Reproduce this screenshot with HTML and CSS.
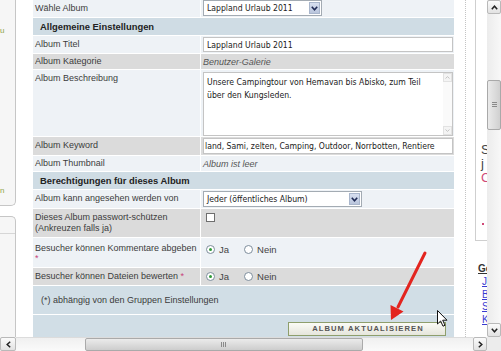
FILE: index.html
```html
<!DOCTYPE html>
<html lang="de">
<head>
<meta charset="utf-8">
<title>Album bearbeiten</title>
<link rel="stylesheet" href="styles.css">
</head>
<body>
<div class="screen">
  <div class="viewport">
    <aside class="leftpanel">
      <div class="lbox lbox-top">
        <span class="lnote">u</span>
        <span class="lnote lnote-b">n</span>
      </div>
      <div class="lbox lbox-bottom"><div class="lbox-head"></div></div>
    </aside>

    <main class="content">
      <table class="form">
        <colgroup><col class="c-label"><col class="c-value"></colgroup>
        <tr class="r17 light">
          <td class="lbl">Wähle Album</td>
          <td class="val val-top">
            <div class="select sel-album"><span class="sel-text">Lappland Urlaub 2011</span><span class="sel-btn"><svg width="7" height="5" viewBox="0 0 7 5"><polyline points="0.8,0.8 3.5,3.8 6.2,0.8" fill="none" stroke="#1f2a55" stroke-width="1.6"/></svg></span></div>
          </td>
        </tr>
        <tr class="r17 head"><td class="hd" colspan="2">Allgemeine Einstellungen</td></tr>
        <tr class="r17 light">
          <td class="lbl">Album Titel</td>
          <td class="val"><input class="field" type="text" value="Lappland Urlaub 2011"></td>
        </tr>
        <tr class="r15 gray">
          <td class="lbl lbl-tight">Album Kategorie</td>
          <td class="val"><span class="ital">Benutzer-Galerie</span></td>
        </tr>
        <tr class="r66 light">
          <td class="lbl">Album Beschreibung</td>
          <td class="val val-top">
            <div class="textarea">
              <div class="ta-text">Unsere Campingtour von Hemavan bis Abisko, zum Teil über den Kungsleden.</div>
              <div class="ta-bar">
                <span class="ta-btn"><svg width="5" height="3" viewBox="0 0 5 3"><polyline points="0.5,2.5 2.5,0.6 4.5,2.5" fill="none" stroke="#c4c4c4" stroke-width="1"/></svg></span>
                <span class="ta-btn"><svg width="5" height="3" viewBox="0 0 5 3"><polyline points="0.5,0.5 2.5,2.4 4.5,0.5" fill="none" stroke="#c4c4c4" stroke-width="1"/></svg></span>
              </div>
            </div>
          </td>
        </tr>
        <tr class="r18 gray">
          <td class="lbl">Album Keyword</td>
          <td class="val"><input class="field field-kw" type="text" value="land, Sami, zelten, Camping, Outdoor, Norrbotten, Rentiere"></td>
        </tr>
        <tr class="r15 light">
          <td class="lbl lbl-tight">Album Thumbnail</td>
          <td class="val"><span class="ital">Album ist leer</span></td>
        </tr>
        <tr class="r17 head"><td class="hd" colspan="2">Berechtigungen für dieses Album</td></tr>
        <tr class="r18 light">
          <td class="lbl">Album kann angesehen werden von</td>
          <td class="val">
            <div class="select sel-view"><span class="sel-text">Jeder (öffentliches Album)</span><span class="sel-btn"><svg width="7" height="5" viewBox="0 0 7 5"><polyline points="0.8,0.8 3.5,3.8 6.2,0.8" fill="none" stroke="#1f2a55" stroke-width="1.6"/></svg></span></div>
          </td>
        </tr>
        <tr class="r28 gray">
          <td class="lbl">Dieses Album passwort-schützen<br>(Ankreuzen falls ja)</td>
          <td class="val val-top"><span class="checkbox"></span></td>
        </tr>
        <tr class="r29 light">
          <td class="lbl lbl-loose">Besucher können Kommentare abgeben <span class="req req-block">*</span></td>
          <td class="val val-top">
            <div class="radios radios-top">
              <span class="radio on"></span><span class="rlabel">Ja</span>
              <span class="radio"></span><span class="rlabel">Nein</span>
            </div>
          </td>
        </tr>
        <tr class="r17 gray">
          <td class="lbl">Besucher können Dateien bewerten <span class="req">*</span></td>
          <td class="val">
            <div class="radios">
              <span class="radio on"></span><span class="rlabel">Ja</span>
              <span class="radio"></span><span class="rlabel">Nein</span>
            </div>
          </td>
        </tr>
        <tr class="r28 note"><td class="notecell" colspan="2">(*) abhängig von den Gruppen Einstellungen</td></tr>
        <tr class="r22 note"><td class="btncell" colspan="2"><button class="btn" type="button">ALBUM AKTUALISIEREN</button></td></tr>
      </table>
    </main>

    <div class="gutter"></div>

    <aside class="sidebar">
      <div class="sbox">
        <div class="sbox-text">S<br>j<br><span class="pink">C</span></div>
        <span class="pdot"></span>
      </div>
      <div class="golinks">
        <div class="go">Go</div>
        <a class="slink" href="#">J</a>
        <a class="slink" href="#">B</a>
        <a class="slink" href="#">S</a>
        <a class="slink" href="#">K</a>
      </div>
    </aside>

    <div class="vscroll">
      <span class="sb-btn"><svg width="7" height="5" viewBox="0 0 7 5"><polyline points="0.8,4.2 3.5,1.2 6.2,4.2" fill="none" stroke="#222" stroke-width="1.5"/></svg></span>
      <div class="vs-track"><div class="vs-thumb"><svg width="5" height="6" viewBox="0 0 5 6"><path d="M0 0.5H5M0 2.5H5M0 4.5H5" stroke="#8a8a8a" stroke-width="1"/></svg></div></div>
      <span class="sb-btn"><svg width="7" height="5" viewBox="0 0 7 5"><polyline points="0.8,0.8 3.5,3.8 6.2,0.8" fill="none" stroke="#222" stroke-width="1.5"/></svg></span>
    </div>
  </div>

  <div class="hscroll">
    <span class="sb-btn hs-left"><svg width="5" height="7" viewBox="0 0 5 7"><polyline points="4.2,0.8 1.2,3.5 4.2,6.2" fill="none" stroke="#222" stroke-width="1.5"/></svg></span>
    <div class="hs-track"><div class="hs-thumb"><svg width="6" height="5" viewBox="0 0 6 5"><path d="M0.5 0V5M2.5 0V5M4.5 0V5" stroke="#8a8a8a" stroke-width="1"/></svg></div></div>
    <span class="sb-btn hs-right"><svg width="5" height="7" viewBox="0 0 5 7"><polyline points="0.8,0.8 3.8,3.5 0.8,6.2" fill="none" stroke="#222" stroke-width="1.5"/></svg></span>
    <span class="corner"></span>
  </div>

  <svg class="overlay" width="501" height="351" viewBox="0 0 501 351">
    <line x1="425" y1="253" x2="398" y2="307" stroke="#e3241e" stroke-width="3" stroke-linecap="round"/>
    <polygon points="391,320 390.5,305 403.5,311.5" fill="#e3241e"/>
    <path d="M437.5 310.5 L437.5 324 L440.6 321 L443 326.2 L445 325.3 L442.7 320.2 L447 320.2 Z" fill="#fff" stroke="#111" stroke-width="1" stroke-linejoin="round"/>
  </svg>
</div>
</body>
</html>
```
FILE: styles.css
```css
* { box-sizing: border-box; }
html, body { margin: 0; padding: 0; }
body {
  width: 501px;
  height: 351px;
  overflow: hidden;
  background: #fff;
  font-family: "Liberation Sans", Arial, sans-serif;
}
.screen {
  position: relative;
  width: 501px;
  height: 351px;
  display: flex;
  flex-direction: column;
}
.viewport {
  display: flex;
  height: 337px;
  overflow: hidden;
}

/* left panel */
.leftpanel {
  width: 16px;
  flex: none;
  display: flex;
  flex-direction: column;
  gap: 10px;
}
.lbox {
  background: #f6f6f6;
  border: 1px solid #c6c6c6;
  border-left: none;
}
.lbox-top {
  height: 206px;
  border-top: none;
  border-radius: 0 0 5px 0;
  display: flex;
  flex-direction: column;
  padding: 27px 0 10px 0;
}
.lnote {
  font-size: 8px;
  line-height: 8px;
  color: #8ea448;
}
.lnote-b { margin-top: auto; }
.lbox-bottom {
  flex: 1;
  border-bottom: none;
  border-radius: 0 5px 0 0;
}
.lbox-head {
  height: 17px;
  border-bottom: 1px solid #d6d6d6;
}

/* main form */
.content {
  margin-left: 16px;
  width: 423px;
  flex: none;
  overflow: hidden;
}
.form {
  border-collapse: separate;
  border-spacing: 1px;
  margin-top: -1px;
  table-layout: fixed;
  width: 423px;
}
.c-label { width: 167px; }
.c-value { width: 253px; }
.r15 { height: 15px; }
.r17 { height: 17px; }
.r18 { height: 18px; }
.r22 { height: 22px; }
.r28 { height: 28px; }
.r29 { height: 29px; }
.r66 { height: 66px; }

.light > td { background: #eef2f6; }
.gray > td { background: #dbdbdb; }
.head > td { background: #cfdce4; }
.note > td { background: #d1dee6; }

.lbl {
  padding: 3px 2px 0 2px;
  vertical-align: top;
  font-size: 9px;
  line-height: 11px;
  color: #3c3c3c;
}
.lbl.lbl-tight { padding-top: 2px; }
.lbl.lbl-loose { padding-top: 5px; }
.req { color: #c8407a; }
.req-block { display: block; line-height: 9px; }

.hd {
  padding: 0 0 0 7px;
  vertical-align: middle;
  font-weight: bold;
  font-size: 9.4px;
  color: #222;
}
.val {
  padding: 0 2px;
  vertical-align: middle;
  font-family: "DejaVu Sans Condensed", "DejaVu Sans", sans-serif;
  font-size: 8.6px;
  color: #222;
}
.val.val-top { vertical-align: top; padding-top: 1px; }
.ital {
  font-family: "Liberation Sans", Arial, sans-serif;
  font-style: italic;
  font-size: 9px;
  color: #555;
}
.field {
  display: block;
  width: 250px;
  height: 15px;
  margin: 0;
  padding: 0 3px;
  border: 1px solid #c4c4c4;
  background: #fff;
  font-family: "DejaVu Sans Condensed", "DejaVu Sans", sans-serif;
  font-size: 8.6px;
  color: #222;
  outline: none;
}
.field.field-kw { height: 16px; padding: 0 1px; }

.select {
  display: flex;
  height: 16px;
  border: 1px solid #a3abb3;
  background: #fff;
}
.sel-album { width: 119px; margin-top: -1px; }
.sel-view { width: 159px; }
.sel-text {
  flex: 1;
  padding-left: 3px;
  line-height: 14px;
  white-space: nowrap;
  overflow: hidden;
}
.sel-btn {
  width: 11px;
  margin: 1px;
  background: linear-gradient(#d7dff0, #b9c5dc);
  border: 1px solid #a9b6cc;
  display: flex;
  align-items: center;
  justify-content: center;
}

.textarea {
  display: flex;
  width: 250px;
  height: 64px;
  margin-top: 1px;
  border: 1px solid #c4c4c4;
  background: #fff;
}
.ta-text {
  flex: 1;
  padding: 3px 3px;
  line-height: 12.5px;
}
.ta-bar {
  width: 9px;
  background: #fafafa;
  display: flex;
  flex-direction: column;
  justify-content: space-between;
}
.ta-btn {
  height: 9px;
  border: 1px solid #e2e2e2;
  background: #f4f4f4;
  display: flex;
  align-items: center;
  justify-content: center;
}

.checkbox {
  display: block;
  width: 9px;
  height: 9px;
  margin: 3px 0 0 3px;
  border: 1px solid #6e6e6e;
  background: #fff;
}

.radios {
  display: flex;
  align-items: center;
  padding-left: 3px;
  font-family: "Liberation Sans", Arial, sans-serif;
  font-size: 9.5px;
  color: #444;
}
.radios.radios-top { margin-top: 5px; }
.radio {
  width: 9px;
  height: 9px;
  border-radius: 50%;
  border: 1px solid #7d8d9c;
  background: #fff;
  display: flex;
  align-items: center;
  justify-content: center;
  flex: none;
}
.radio.on::after {
  content: "";
  width: 3px;
  height: 3px;
  border-radius: 50%;
  background: #2e9a36;
}
.rlabel { margin: 0 15px 0 4px; line-height: 11px; }

.notecell {
  padding: 0 0 0 8px;
  vertical-align: middle;
  font-size: 9px;
  color: #3c3c3c;
}
.btncell {
  text-align: right;
  vertical-align: top;
  padding: 7px 8px 0 0;
  line-height: 14px;
}
.btn {
  display: inline-block;
  vertical-align: top;
  width: 158px;
  height: 14px;
  margin: 0;
  padding: 0 0 0 2px;
  border: 1px solid #8e9e6c;
  background: linear-gradient(#fbfbf6, #e5e5dc);
  font-family: "Liberation Sans", Arial, sans-serif;
  font-weight: bold;
  font-size: 7.6px;
  letter-spacing: 1.1px;
  line-height: 12px;
  color: #555;
}

/* right side */
.gutter { width: 10px; flex: none; }
.sidebar {
  width: 22px;
  flex: none;
  border-left: 1px dotted #c4c4c4;
  padding-left: 9px;
  overflow: hidden;
  font-family: "Liberation Sans", Arial, sans-serif;
}
.sbox {
  height: 241px;
  border-left: 1px solid #cfcfcf;
  border-bottom: 1px solid #cfcfcf;
  padding: 143px 0 0 5px;
  display: flex;
  flex-direction: column;
}
.sbox-text {
  font-size: 13px;
  line-height: 14px;
  color: #444;
  white-space: nowrap;
}
.pink { color: #d04a78; }
.pdot {
  width: 2px;
  height: 2px;
  margin: 38px 0 0 1px;
  background: #d04a78;
}
.golinks {
  display: flex;
  flex-direction: column;
  padding: 22px 0 0 3px;
}
.go {
  font-weight: bold;
  font-size: 10px;
  line-height: 12px;
  color: #333;
  text-decoration: underline;
  margin-bottom: 1px;
}
.slink {
  padding-left: 4px;
  font-size: 10px;
  line-height: 12.5px;
  color: #3a3ad0;
  text-decoration: underline;
}

/* scrollbars */
.sb-btn {
  width: 14px;
  height: 14px;
  flex: none;
  border: 1px solid #b9b9b9;
  border-radius: 2px;
  background: linear-gradient(#fbfbfb, #e2e2e2);
  display: flex;
  align-items: center;
  justify-content: center;
}
.vscroll {
  width: 14px;
  flex: none;
  display: flex;
  flex-direction: column;
  background: #f1f1f1;
}
.vs-track {
  flex: 1;
  background: linear-gradient(90deg, #ececec, #f8f8f8);
}
.vs-thumb {
  margin-top: 66px;
  height: 50px;
  border: 1px solid #a9a9a9;
  border-radius: 2px;
  background: linear-gradient(90deg, #eaeaea, #d0d0d0);
  display: flex;
  align-items: center;
  justify-content: center;
}
.hscroll {
  display: flex;
  height: 14px;
  background: #f1f1f1;
}
.sb-btn.hs-left { width: 16px; }
.sb-btn.hs-right { width: 14px; }
.hs-track {
  flex: 1;
  background: linear-gradient(#f0f0f0, #fafafa);
  border-top: 1px solid #dcdcdc;
}
.hs-thumb {
  margin-left: 69px;
  width: 278px;
  height: 13px;
  border: 1px solid #aaa;
  border-radius: 2px;
  background: linear-gradient(#ebebeb, #cdcdcd);
  display: flex;
  align-items: center;
  justify-content: center;
}
.corner {
  width: 14px;
  flex: none;
  background: #ececec;
}

.overlay {
  position: absolute;
  left: 0;
  top: 0;
  pointer-events: none;
}
```
